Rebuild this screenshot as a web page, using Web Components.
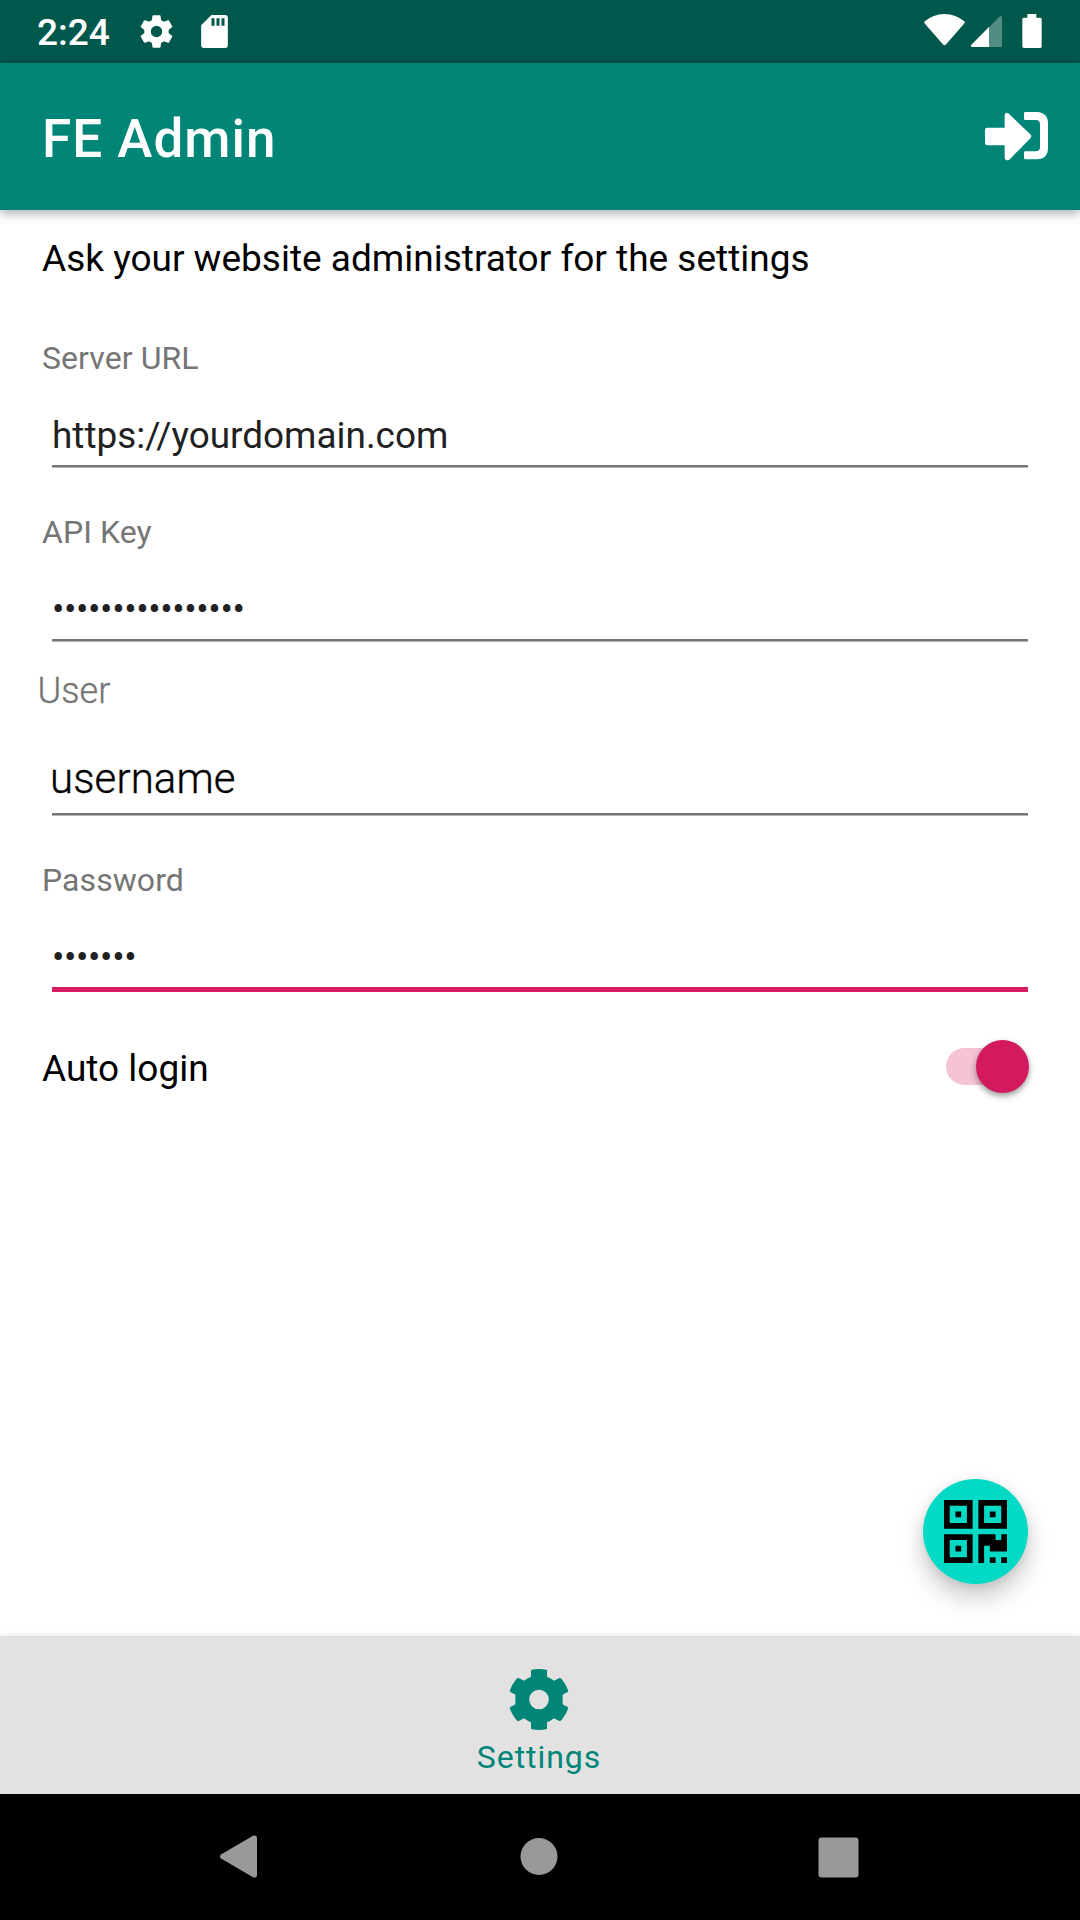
<!DOCTYPE html>
<html lang="en">
<head>
<meta charset="utf-8">
<title>FE Admin</title>
<style>
html,body{margin:0;padding:0}
body{width:1080px;height:1920px;overflow:hidden;background:#fff;font-family:Roboto,"Noto Sans",sans-serif}
</style>
</head>
<body>
<admin-screen></admin-screen>
<script>
const define = (name, html) => customElements.define(name, class extends HTMLElement {
  constructor() {
    super();
    const t = document.createElement('template');
    t.innerHTML = html;
    this.attachShadow({mode: 'open'}).appendChild(t.content.cloneNode(true));
  }
});

define('status-bar', `
<style>
:host{display:flex;box-sizing:border-box;height:63px;padding:0 38px 0 37px;background:#00574b;color:#fff;justify-content:space-between}
div{display:flex}
.time{font-size:37px;font-weight:500;line-height:66px;width:105px;white-space:nowrap}
svg{display:block;fill:#fff;flex:none}
</style>
<div>
  <span class="time">2:24</span>
  <svg style="margin:12px 0 0 -4.6px" width="39" height="39" viewBox="0 0 24 24"><path d="M19.43 12.98c.04-.32.07-.64.07-.98s-.03-.66-.07-.98l2.11-1.65c.19-.15.24-.42.12-.64l-2-3.46c-.12-.22-.39-.3-.61-.22l-2.49 1c-.52-.4-1.08-.73-1.69-.98l-.38-2.65C14.46 2.18 14.25 2 14 2h-4c-.25 0-.46.18-.49.42l-.38 2.65c-.61.25-1.17.59-1.69.98l-2.49-1c-.23-.09-.49 0-.61.22l-2 3.46c-.13.22-.07.49.12.64l2.11 1.65c-.04.32-.07.65-.07.98s.03.66.07.98l-2.11 1.65c-.19.15-.24.42-.12.64l2 3.46c.12.22.39.3.61.22l2.49-1c.52.4 1.08.73 1.69.98l.38 2.65c.03.24.24.42.49.42h4c.25 0 .46-.18.49-.42l.38-2.65c.61-.25 1.17-.59 1.69-.98l2.49 1c.23.09.49 0 .61-.22l2-3.46c.12-.22.07-.49-.12-.64l-2.11-1.65zM12 15.5a3.5 3.5 0 1 1 0-7 3.5 3.5 0 0 1 0 7z"/></svg>
  <svg style="margin:15px 0 0 24.6px" width="27" height="33" viewBox="604.5 45 81 99"><path fill-rule="evenodd" d="M636 45H677Q685 45 685 53V136Q685 144 677 144H613Q605 144 605 136V76ZM636 55V77H645V55ZM651 55V77H660V55ZM666 55V77H675V55Z"/></svg>
</div>
<div>
  <svg style="margin:14px 6px 0 0" width="41" height="32" viewBox="132.5 42 123 96"><path d="M133 65Q160 42 194 42T255 65Q255 69 252 72L199 133Q194 139 189 133L136 72Q133 69 133 65Z"/></svg>
  <svg style="margin:15.6px 20px 0 0" width="31" height="31.4" viewBox="273 47 93 94"><path opacity=".32" d="M326 82L357 50Q366 43 366 52V136Q366 141 361 141H326Z"/><path d="M327 80V141H277Q271 139 274 133Z"/></svg>
  <svg style="margin:14px 0 0 0" width="20" height="34" viewBox="425 42 60 102"><path d="M441 42H468V53H480Q484 53 484 58V140Q484 144 479 144H431Q426 144 426 139V57Q426 53 431 53H441Z"/></svg>
</div>`);

define('app-bar', `
<style>
:host{display:flex;position:relative;z-index:1;box-sizing:border-box;height:147px;padding:0 32px 0 42px;background:#008577;color:#fff;justify-content:space-between;box-shadow:0 3px 10px rgba(0,0,0,.34)}
h1{margin:0;font-size:53px;font-weight:500;line-height:152px;letter-spacing:1px}
svg{display:block;fill:#fff;margin-top:49px}
</style>
<h1><slot></slot></h1>
<svg width="63" height="49" viewBox="315 336 189 147"><path d="M322 383H374V346Q375 335 385 340L451 403Q457 409 451 415L388 479Q376 485 374 474V436H322Q315 436 315 429V390Q315 383 322 383ZM436 336H471Q504 338 504 371V443Q504 476 471 478H436Q432 478 432 474V458Q432 454 436 454H467Q480 454 480 441V373Q480 360 467 360H436Q432 360 432 356V340Q432 336 436 336Z"/></svg>`);

define('text-field', `
<style>
:host{display:flex;flex-direction:column;height:174px;box-sizing:border-box;padding:0 52px}
.label{font-size:var(--label-size,32px);font-weight:var(--label-weight,400);-webkit-text-stroke:var(--stroke,0);line-height:40px;margin:var(--label-top,44px) 0 0 var(--label-x,-10px);color:#757575;white-space:nowrap;letter-spacing:var(--label-ls,.07px)}
.value{flex:1;display:flex;align-items:flex-end;color:var(--value-color,#212121);font-size:var(--value-size,36.9px);font-weight:var(--value-weight,400);-webkit-text-stroke:var(--stroke,0);line-height:var(--value-line,59px);letter-spacing:var(--value-ls,0);margin-left:var(--value-x,0)}
.line{height:2px;background:#757575;border-bottom:1px solid #b4b4b4}
:host([focused]) .line{height:5px;border:0;background:#d81b60;margin-bottom:-2px}
</style>
<div class="label"><slot name="label"></slot></div>
<div class="value"><slot></slot></div>
<div class="line"></div>`);

define('toggle-row', `
<style>
:host{display:flex;justify-content:space-between;padding:0 51px 0 42px;color:#000;font-size:37px;line-height:62px}
.track{display:flex;justify-content:flex-end;align-items:center;width:83px;height:37px;margin-top:10px;border-radius:19px;background:linear-gradient(90deg,#f5c3d6 65px,transparent 65px)}
.thumb{width:53px;height:53px;border-radius:50%;background:#d41a5f;box-shadow:0 3px 6px rgba(0,0,0,.4);flex:none}
</style>
<span><slot></slot></span><div class="track"><div class="thumb"></div></div>`);

define('scan-button', `
<style>
:host{display:flex;align-items:center;justify-content:center;width:105px;height:105px;border-radius:50%;background:#03dac5;box-shadow:0 13px 24px rgba(0,0,0,.22),0 2px 8px rgba(0,0,0,.08)}
svg{display:block}
</style>
<svg width="63" height="63" viewBox="0 0 11 11"><path fill-rule="evenodd" d="M0 0H5V5H0ZM1 1V4H4V1ZM2 2H3V3H2ZM6 0H11V5H6ZM7 1V4H10V1ZM8 2H9V3H8ZM0 6H5V11H0ZM1 7V10H4V7ZM2 8H3V9H2ZM6 6H9V7H10V6H11V9H8V8H7V11H6ZM8 10H9V11H8ZM10 10H11V11H10Z"/></svg>`);

define('bottom-tabs', `
<style>
:host{display:flex;flex-direction:column;align-items:center;position:relative;height:158px;box-sizing:border-box;padding-right:2px;background:#e2e2e2;color:#008577;font-size:32px;line-height:40px;letter-spacing:.95px;box-shadow:0 0 7px rgba(0,0,0,.1)}
svg{display:block;fill:#008577;margin:32px 1px 7px 0}
</style>
<svg width="61" height="62" viewBox="-31 -31.5 61 62"><path fill-rule="evenodd" d="M-8-29.5Q0-31.5 8-29.5V-22.8Q11.7-21.3 15-18.7L20.3-21.5Q21.8-21.8 23-20Q27-15 29.2-9Q29.4-8 28.6-7.6L23.6-4.8V4.8L28.6 7.6Q29.4 8 29.2 9Q27 15 23 20Q21.8 21.8 20.3 21.5L15 18.7Q11.7 21.3 8 22.8V29.5Q0 31.5-8 29.5V22.8Q-11.7 21.3-15 18.7L-20.3 21.5Q-21.8 21.8-23 20Q-27 15-29.2 9Q-29.4 8-28.6 7.6L-23.6 4.8V-4.8L-28.6-7.6Q-29.4-8-29.2-9Q-27-15-23-20Q-21.8-21.8-20.3-21.5L-15-18.7Q-11.7-21.3-8-22.8ZM9.8 0A9.8 9.8 0 1 0-9.8 0A9.8 9.8 0 1 0 9.8 0Z"/></svg>
<span><slot></slot></span>`);

define('system-nav', `
<style>
:host{display:flex;position:relative;height:126px;box-sizing:border-box;padding:0 221.5px 0 219px;background:#000;justify-content:space-between;align-items:center}
svg{display:block;fill:#999}
</style>
<svg width="38" height="43" viewBox="0 0 38 43" style="margin-top:-1px"><path d="M2 19.5L34 .8Q38-.5 38 3V40Q38 43.5 34 42.2L2 23.5Q0 21.5 2 19.5Z"/></svg>
<svg width="38" height="38" viewBox="0 0 38 38" style="margin-left:4px"><circle cx="19" cy="18.5" r="18.5"/></svg>
<svg width="41" height="41" viewBox="0 0 41 41"><rect x=".5" y=".5" width="40" height="40" rx="3"/></svg>`);

define('admin-screen', `
<style>
:host{display:flex;flex-direction:column;width:1080px;height:1920px;background:#fff}
main{flex:1;display:flex;flex-direction:column}
p{margin:0;height:84px;line-height:97px;padding-left:42px;font-size:37px;color:#000;white-space:nowrap}
.user{--label-size:36px;--label-weight:300;--label-top:29px;--label-x:-14.5px;--value-size:42px;--value-weight:300;--value-line:69px;--value-color:#000;--value-x:-2px;--value-ls:.1px;--stroke:.35px}
.secret{--value-ls:-.42px}
toggle-row{margin-top:48px}
scan-button{margin:auto 52px 52px auto}
</style>
<status-bar></status-bar>
<app-bar>FE Admin</app-bar>
<main>
  <p>Ask your website administrator for the settings</p>
  <text-field><span slot="label">Server URL</span>https://yourdomain.com</text-field>
  <text-field class="secret"><span slot="label">API Key</span>••••••••••••••••</text-field>
  <text-field class="user"><span slot="label">User</span>username</text-field>
  <text-field class="secret" focused><span slot="label">Password</span>•••••••</text-field>
  <toggle-row>Auto login</toggle-row>
  <scan-button></scan-button>
</main>
<bottom-tabs>Settings</bottom-tabs>
<system-nav></system-nav>`);
</script>
</body>
</html>
